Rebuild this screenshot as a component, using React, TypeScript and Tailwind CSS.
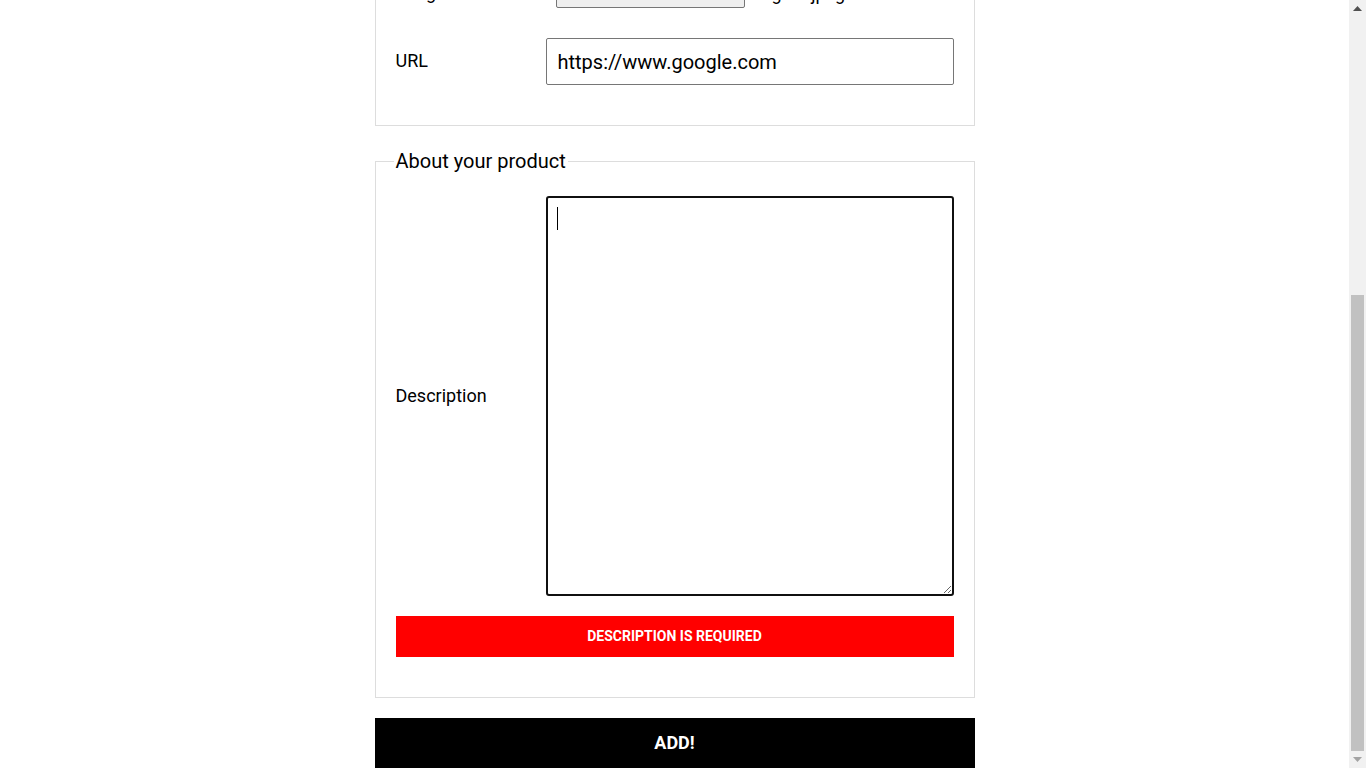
const inputCls =
  "w-[408px] h-[47px] border border-[#767676] rounded-[2px] px-[11px] text-[20px] text-black bg-white outline-none";

function Row({ label, children }: { label: string; children: React.ReactNode }) {
  return (
    <div className="flex items-center mb-5">
      <label className="w-[150px] text-[18px] leading-[21px] pb-[2px]">{label}</label>
      {children}
    </div>
  );
}

// window scrollbar as it looks when scrolled to the very bottom
function Scrollbar() {
  return (
    <div className="w-[17px] h-screen shrink-0 bg-[#f1f1f1] flex flex-col items-center">
      <div className="h-[17px] flex items-center justify-center">
        <svg width="9" height="5" viewBox="0 0 9 5">
          <path d="M4.5 0L9 5H0z" fill="#505050" />
        </svg>
      </div>
      <div className="flex-1 w-full flex flex-col px-[2px]">
        <div className="h-[278px]" />
        <div className="h-[456px] bg-[#c1c1c1]" />
      </div>
      <div className="h-[17px] flex items-center justify-center">
        <svg width="9" height="5" viewBox="0 0 9 5">
          <path d="M0 0H9L4.5 5z" fill="#a3a3a3" />
        </svg>
      </div>
    </div>
  );
}

export default function App() {
  return (
    <div className="h-screen flex overflow-hidden font-['Roboto',sans-serif] text-black bg-white">
      <div className="flex-1 flex flex-col justify-end overflow-hidden">
        <div className="w-[600px] mx-auto shrink-0 pt-[60px]">
          <h1 className="text-[36px] leading-[42px] font-bold mb-4">Add a product</h1>
          <p className="text-[18px] leading-[24px] text-[#444] mb-[100px]">
            Tell the shop about the product you want to sell.
          </p>

          <form onSubmit={(e) => e.preventDefault()}>
            {/* Basic info */}
            <fieldset className="border border-[#ddd] px-5 pb-5 pt-[23px]">
              <legend className="-ml-0.5 px-0.5 text-[20px] leading-[23px]">Basic information</legend>
              <Row label="Name">
                <input className={inputCls} defaultValue="Golden watch" />
              </Row>
              <Row label="Price">
                <input className={inputCls} defaultValue="199.99" />
              </Row>
              <Row label="Image">
                <div className="w-[408px] p-[10px] flex items-center">
                  <button
                    type="button"
                    className="w-[189px] h-[30px] bg-[#efefef] border border-[#767676] rounded-[2px] text-[14px]"
                  >
                    Choose File
                  </button>
                  <span className="ml-[27px] text-[18px]">gold.jpeg</span>
                </div>
              </Row>
              <Row label="URL">
                <input className={inputCls} defaultValue="https://www.google.com" />
              </Row>
            </fieldset>

            {/* About */}
            <fieldset className="mt-6 border border-[#ddd] px-5 pb-5 pt-[23px]">
              <legend className="-ml-0.5 px-0.5 text-[20px] leading-[23px]">About your product</legend>
              <Row label="Description">
                <div className="relative">
                  <textarea className="block w-[408px] h-[400px] border-2 border-[#101010] rounded-[3px] p-[10px] text-[20px] outline-none caret-transparent" />
                  <span className="absolute left-[11px] top-[11px] w-px h-[23px] bg-black" />
                </div>
              </Row>
              <div className="mb-5 h-[41px] bg-[#ff0000] flex items-center justify-center text-white text-[14px] font-bold uppercase">
                Description is required
              </div>
            </fieldset>

            <button type="submit" className="block mt-5 w-full h-[50px] pb-0.5 bg-black text-white text-[18px] font-bold">
              ADD!
            </button>
          </form>
        </div>
      </div>
      <Scrollbar />
    </div>
  );
}
